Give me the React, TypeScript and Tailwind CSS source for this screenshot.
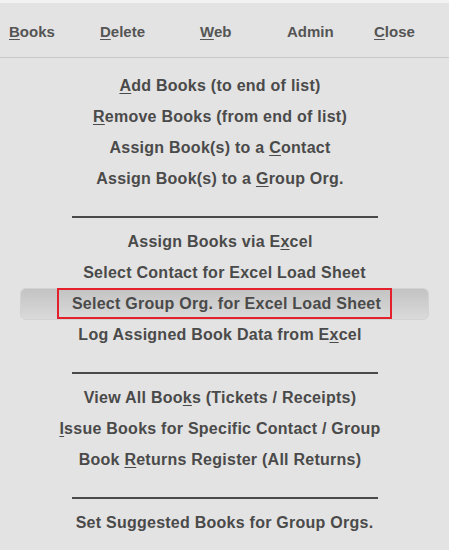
import React from 'react'

type Item = { label: string; key?: number; active?: boolean }

const GROUPS: Item[][] = [
  [
    { label: 'Add Books (to end of list)', key: 0 },
    { label: 'Remove Books (from end of list)', key: 0 },
    { label: 'Assign Book(s) to a Contact', key: 20 },
    { label: 'Assign Book(s) to a Group Org.', key: 20 },
  ],
  [
    { label: 'Assign Books via Excel', key: 18 },
    { label: 'Select Contact for Excel Load Sheet' },
    { label: 'Select Group Org. for Excel Load Sheet', active: true },
    { label: 'Log Assigned Book Data from Excel', key: 29 },
  ],
  [
    { label: 'View All Books (Tickets / Receipts)', key: 12 },
    { label: 'Issue Books for Specific Contact / Group', key: 0 },
    { label: 'Book Returns Register (All Returns)', key: 5 },
  ],
  [{ label: 'Set Suggested Books for Group Orgs.' }],
]

function Label({ text, k }: { text: string; k?: number }) {
  if (k === undefined) return <span className="whitespace-pre">{text}</span>
  return (
    <span className="whitespace-pre">
      {text.slice(0, k)}
      <span className="underline underline-offset-2">{text[k]}</span>
      {text.slice(k + 1)}
    </span>
  )
}

const NAV = [
  { label: 'Books', key: 0, w: 'w-[91px]' },
  { label: 'Delete', key: 0, w: 'w-[100px]' },
  { label: 'Web', key: 0, w: 'w-[87px]' },
  { label: 'Admin', w: 'w-[87px]' },
  { label: 'Close', key: 0, w: 'w-[60px]' },
]

export default function App() {
  return (
    <div className="w-[449px] h-[550px] bg-[#e3e3e3] text-[#4a4a4a] font-['Liberation_Sans',Arial,sans-serif] font-bold text-[16px] overflow-hidden">
      <div className="h-[3px] bg-[#f2f2f2]" />

      {/* Menu bar */}
      <nav className="flex items-center h-[55px] pt-[4px] pl-[9px] border-b border-[#c9c9c9] text-[#555] text-[15px]">
        {NAV.map(n => (
          <span key={n.label} className={`${n.w} shrink-0`}>
            <Label text={n.label} k={n.key} />
          </span>
        ))}
      </nav>

      {/* Items */}
      <div className="pt-[12px] tracking-[0.25px]">
        {GROUPS.map((g, gi) => (
          <div key={gi}>
            {gi > 0 && <div className="mx-auto w-[306px] h-[2px] bg-[#4a4a4a] mt-[22px] mb-[8px]" />}
            {g.map(it =>
              it.active ? (
                <div key={it.label} className="px-[20px] h-[31px] flex items-center">
                  <div className="w-full h-[32px] rounded-[6px] border border-[#d2d2d2] bg-gradient-to-b from-[#c3c3c3] to-[#dadada] flex items-center justify-center">
                    <span className="border-2 border-[#e3202c] pl-[13px] pr-[9px] h-[31px] flex items-center">
                      <Label text={it.label} />
                    </span>
                  </div>
                </div>
              ) : (
                <div
                  key={it.label}
                  className={`h-[31px] flex items-center justify-center ${it.key !== undefined ? 'pr-[9px]' : ''}`}
                >
                  <Label text={it.label} k={it.key} />
                </div>
              )
            )}
          </div>
        ))}
      </div>
    </div>
  )
}
